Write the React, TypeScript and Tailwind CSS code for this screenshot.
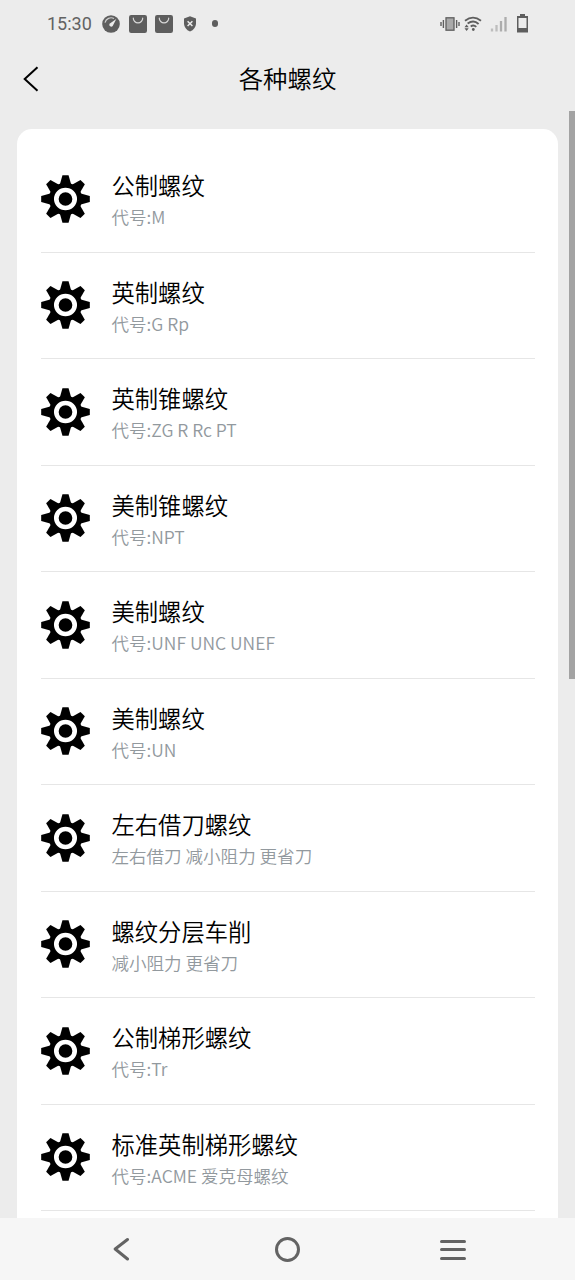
type Thread = {
  name: string
  desc: string
}

const THREADS: Thread[] = [
  { name: '公制螺纹', desc: '代号:M' },
  { name: '英制螺纹', desc: '代号:G Rp' },
  { name: '英制锥螺纹', desc: '代号:ZG R Rc PT' },
  { name: '美制锥螺纹', desc: '代号:NPT' },
  { name: '美制螺纹', desc: '代号:UNF UNC UNEF' },
  { name: '美制螺纹', desc: '代号:UN' },
  { name: '左右借刀螺纹', desc: '左右借刀 减小阻力 更省刀' },
  { name: '螺纹分层车削', desc: '减小阻力 更省刀' },
  { name: '公制梯形螺纹', desc: '代号:Tr' },
  { name: '标准英制梯形螺纹', desc: '代号:ACME 爱克母螺纹' },
]

const TOOTH_ANGLES = [0, 45, 90, 135, 180, 225, 270, 315]

function GearIcon() {
  return (
    <svg viewBox="0 0 48 48" className="h-12 w-[49px] shrink-0" preserveAspectRatio="none" aria-hidden="true">
      {TOOTH_ANGLES.map((angle) => (
        <path
          key={angle}
          d="M18.6 9L21 0.2H27L29.4 9L24 24Z"
          transform={`rotate(${angle} 24 24)`}
        />
      ))}
      <circle cx="24" cy="24" r="16.3" />
      <circle cx="24" cy="24" r="9" fill="none" stroke="#fff" strokeWidth="4.6" />
    </svg>
  )
}

function BagIcon() {
  return (
    <svg viewBox="0 0 18 18" className="size-[18px]" aria-hidden="true">
      <rect width="18" height="18" rx="2.2" fill="#5e5e5e" />
      <path d="M4.3 3.2a4.7 4.7 0 0 0 9.4 0" fill="none" stroke="#d8d8d8" strokeWidth="1.2" strokeLinecap="round" />
    </svg>
  )
}

function StatusBar() {
  return (
    <div className="flex h-[47px] shrink-0 items-center justify-between pr-[47px] pl-[47px]">
      <div className="flex items-center">
        <span className="w-[55px] pt-px font-[Roboto] text-[18px] leading-[18px] font-normal text-[#626262]">15:30</span>
        <svg viewBox="0 0 18 18" className="size-[18px]" aria-hidden="true">
          <circle cx="9" cy="9" r="8.8" fill="#5e5e5e" />
          <path d="M3 7.6A6.3 6.3 0 0 1 12 3.5" fill="none" stroke="#d0d0d0" strokeWidth="1.2" />
          <path d="M14.3 4L10.7 11.1A2 2 0 0 1 7.5 8.8Z" fill="#ececec" />
        </svg>
        <div className="ml-[9px] flex gap-[7.5px]">
          <BagIcon />
          <BagIcon />
        </div>
        <svg viewBox="0 0 14 16" className="ml-[10px] h-4 w-[14px]" aria-hidden="true">
          <path d="M7 0.3L13 2.5V8Q12.6 13 7 15.6Q1.4 13 1 8V2.5Z" fill="#5e5e5e" />
          <path d="M4.6 5.2L9.4 10M9.4 5.2L4.6 10" stroke="#ececec" strokeWidth="1.5" />
        </svg>
        <span className="ml-[15px] size-[6.5px] rounded-full bg-[#5e5e5e]" />
      </div>
      <div className="flex items-center">
        <svg viewBox="0 0 20 14" className="h-[14px] w-5" aria-hidden="true">
          <rect x="6" y="0.8" width="8" height="12.4" fill="#a9a9a9" stroke="#5e5e5e" strokeWidth="1.3" />
          <path d="M3.4 3V11M16.6 3V11M1 5V9M19 5V9" stroke="#5e5e5e" strokeWidth="1.4" />
        </svg>
        <svg viewBox="0 0 18 16" className="ml-1 h-4 w-[18px]" aria-hidden="true">
          <path d="M1 4.7Q9 -1.3 17 4.7M3.6 7.6Q9.6 3.3 14.6 8M6.7 10.4Q9.6 8.4 12.3 10.9" fill="none" stroke="#5e5e5e" strokeWidth="1.8" />
          <circle cx="9.3" cy="13.5" r="1.4" fill="#5e5e5e" />
          <path d="M0.5 11.2L2.6 8.6L4.7 11.2ZM0.5 12.2H4.7L2.6 15Z" fill="#5e5e5e" />
        </svg>
        <svg viewBox="0 0 17 16" className="ml-2 h-4 w-[17px]" aria-hidden="true">
          <path d="M2 12.5V15.5M6.5 9V15.5" stroke="#bdbdbd" strokeWidth="2.3" />
          <path d="M11 5V15.5M15.5 1V15.5" stroke="#adadad" strokeWidth="2.3" />
        </svg>
        <svg viewBox="0 0 11 19" className="ml-[10px] h-[19px] w-[11px]" aria-hidden="true">
          <path d="M3 0H8V2H11V18.5H0V2H3ZM1.5 4V14H9.5V4Z" fill="#5e5e5e" fillRule="evenodd" />
        </svg>
      </div>
    </div>
  )
}

function ThreadRow({ name, desc }: Thread) {
  return (
    <li className="flex h-[106.5px] shrink-0 items-center border-b border-[#e6e6e6]">
      <GearIcon />
      <div className="ml-[21.5px] pt-[3px]">
        <p className="text-[23.3px] leading-[33px] text-black">{name}</p>
        <p className="text-[17.55px] leading-[29px] text-[#92999e]">{desc}</p>
      </div>
    </li>
  )
}

export default function App() {
  return (
    <div className="flex h-[1280px] w-[575px] flex-col overflow-hidden bg-[#ececec] font-['Noto_Sans_CJK_SC',sans-serif] font-[350]">
      <StatusBar />
      <header className="grid h-16 shrink-0 grid-cols-[1fr_auto_1fr] items-center">
        <button type="button" aria-label="返回" className="pl-[23px]">
          <svg viewBox="0 0 16 26" className="h-[26px] w-4" aria-hidden="true">
            <path d="M14.5 1.2L1.7 13L14.5 24.8" fill="none" stroke="#000" strokeWidth="2" />
          </svg>
        </button>
        <h1 className="pb-0.5 text-[24.4px] leading-9 text-black">各种螺纹</h1>
      </header>
      <main className="flex min-h-0 flex-1 justify-between pl-[17px]">
        <div className="mt-[18px] w-[541px] overflow-hidden rounded-t-[15px] bg-white pt-[17px] pr-[23px] pl-6">
          <ul className="flex flex-col">
            {THREADS.map((thread, index) => (
              <ThreadRow key={index} {...thread} />
            ))}
          </ul>
        </div>
        <div className="h-[568px] w-[6px] bg-[#a3a3a3]" />
      </main>
      <nav className="flex h-[62px] shrink-0 items-center justify-between bg-[#f6f6f6] pr-[109px] pl-[113px]">
        <svg viewBox="0 0 17 24" className="h-6 w-[17px]" aria-hidden="true">
          <path d="M14.5 2.5L2.2 12L14.5 22" fill="none" stroke="#636363" strokeWidth="3" strokeLinecap="round" strokeLinejoin="round" />
        </svg>
        <span className="ml-[5px] size-[25px] rounded-full border-[3px] border-[#636363]" />
        <div className="flex w-[26px] flex-col gap-[5.5px] pt-px">
          <span className="h-[3px] rounded-full bg-[#636363]" />
          <span className="h-[3px] rounded-full bg-[#636363]" />
          <span className="h-[3px] rounded-full bg-[#636363]" />
        </div>
      </nav>
    </div>
  )
}
